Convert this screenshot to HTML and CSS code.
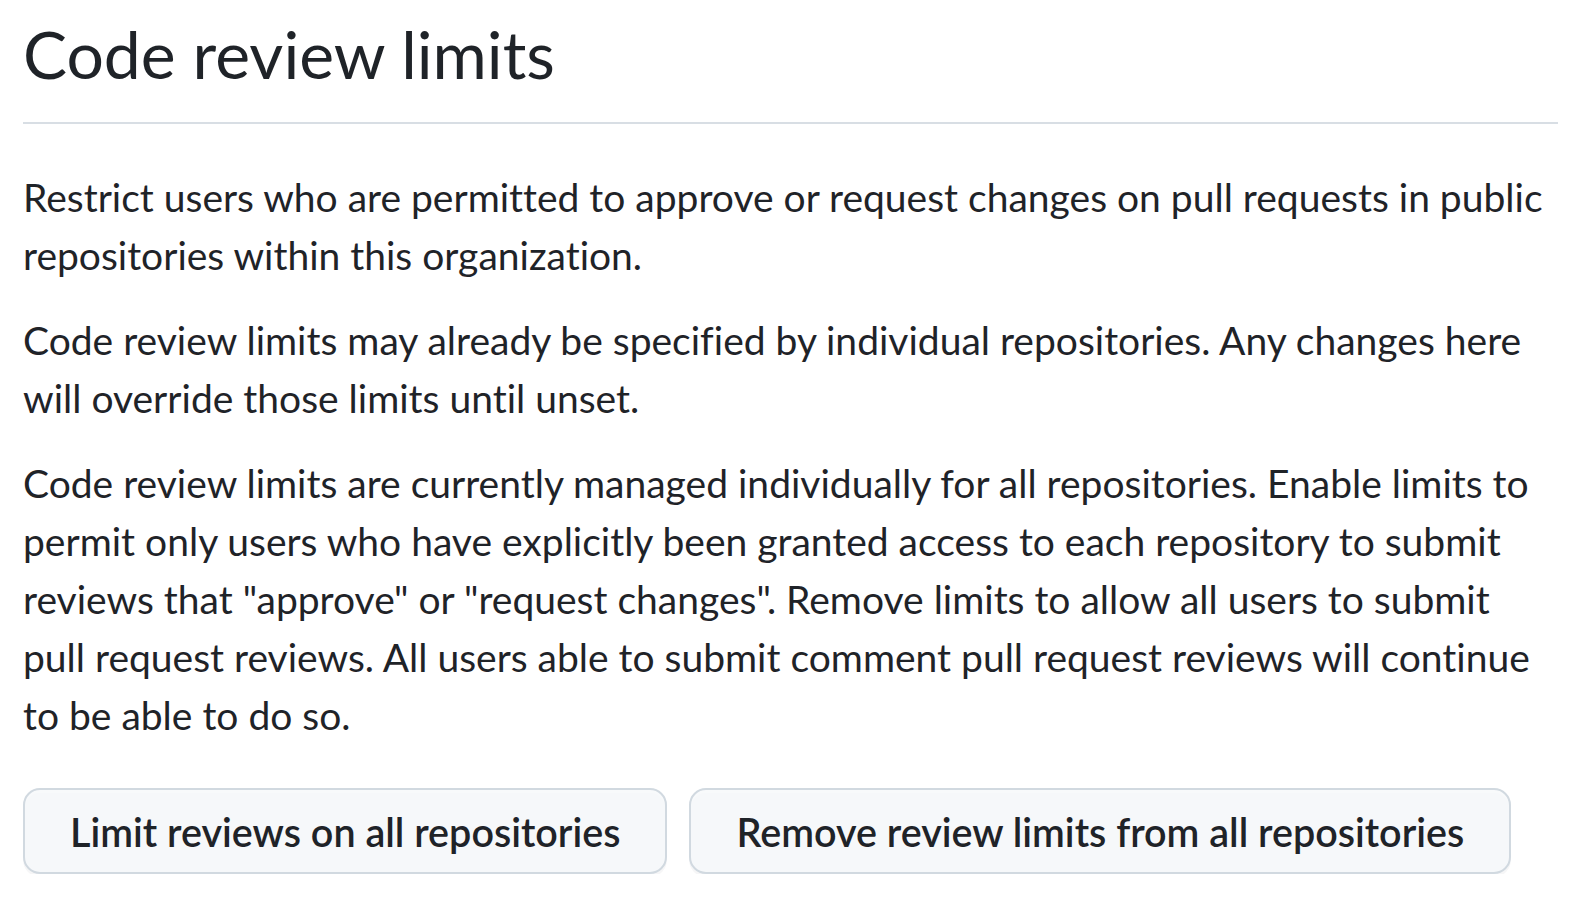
FILE: index.html
```html
<!DOCTYPE html>
<html lang="en">
<head>
<meta charset="utf-8">
<title>Code review limits</title>
<link rel="stylesheet" href="styles.css">
</head>
<body>
<main class="page">
  <div class="subhead">
    <h2 class="subhead-heading">Code review limits</h2>
  </div>
  <p class="para">Restrict users who are permitted to approve or request changes on pull requests in public repositories within this organization.</p>
  <p class="para">Code review limits may already be specified by individual repositories. Any changes here will override those limits until unset.</p>
  <p class="para">Code review limits are currently managed individually for all repositories. Enable limits to permit only users who have explicitly been granted access to each repository to submit reviews that "approve" or "request changes". Remove limits to allow all users to submit pull request reviews. All users able to submit comment pull request reviews will continue to be able to do so.</p>
  <div class="actions">
    <button class="btn" type="button">Limit reviews on all repositories</button>
    <button class="btn" type="button">Remove review limits from all repositories</button>
  </div>
</main>
</body>
</html>
```
FILE: styles.css
```css
html, body {
  margin: 0;
  padding: 0;
  background: #ffffff;
}

body {
  font-family: "Lato", "Noto Sans", sans-serif;
  color: #1f2328;
  font-variant-ligatures: no-common-ligatures;
}

.page {
  width: 1535px;
  padding: 12px 0 0 23px;
  box-sizing: content-box;
}

.subhead {
  padding-bottom: 27px;
  border-bottom: 2px solid #d8dee4;
  margin-bottom: 44px;
}

.subhead-heading {
  margin: 0;
  font-size: 66px;
  line-height: 83px;
  font-weight: 400;
}

.para {
  margin: 0 0 27px 0;
  font-size: 39px;
  line-height: 58px;
}

.para:last-of-type {
  margin-bottom: 44px;
}

.actions {
  display: flex;
  gap: 22px;
}

.btn {
  height: 86px;
  padding: 0 45px;
  font-family: "Lato", "Noto Sans", sans-serif;
  font-variant-ligatures: no-common-ligatures;
  font-size: 39.5px;
  font-weight: 600;
  color: #1f2328;
  background: #f6f8fa;
  border: 2px solid #d1d9e0;
  border-radius: 17px;
  box-shadow: 0 3px 0 rgba(31, 35, 40, 0.04), inset 0 3px 0 rgba(255, 255, 255, 0.25);
  cursor: pointer;
}
```
